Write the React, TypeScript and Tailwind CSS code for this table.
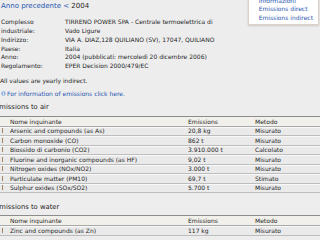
import React from 'react';

const info = [
  { label: 'Complesso', value: 'TIRRENO POWER SPA - Centrale termoelettrica di' },
  { label: 'industriale:', value: 'Vado Ligure' },
  { label: 'Indirizzo:', value: 'VIA A. DIAZ,128 QUILIANO (SV), 17047, QUILIANO' },
  { label: 'Paese:', value: 'Italia' },
  { label: 'Anno:', value: '2004 (pubblicati: mercoledì 20 dicembre 2006)' },
  { label: 'Regolamento:', value: 'EPER Decision 2000/479/EC' },
];

const air = [
  ['Arsenic and compounds (as As)', '20,8 kg', 'Misurato'],
  ['Carbon monoxide (CO)', '862 t', 'Misurato'],
  ['Biossido di carbonio (CO2)', '3.910.000 t', 'Calcolato'],
  ['Fluorine and inorganic compounds (as HF)', '9,02 t', 'Misurato'],
  ['Nitrogen oxides (NOx/NO2)', '3.000 t', 'Misurato'],
  ['Particulate matter (PM10)', '69,7 t', 'Stimato'],
  ['Sulphur oxides (SOx/SO2)', '5.700 t', 'Misurato'],
];

const water = [['Zinc and compounds (as Zn)', '117 kg', 'Misurato']];

const Table: React.FC<{ rows: string[][] }> = ({ rows }) => (
  <div className="w-full border-t border-[#8c8c8c]">
    <div className="flex items-center h-[10px] bg-[#f2f0ea] border-b border-[#a9a9a9] text-[6px]">
      <span className="w-[188px] pl-[10px]">Nome inquinante</span>
      <span className="w-[67px]">Emissions</span>
      <span>Metodo</span>
    </div>
    {rows.map((r) => (
      <div
        key={r[0]}
        className="flex items-center h-[9.5px] bg-[#eaeaea] border-b border-[#bdbdbd] shadow-[inset_0_1px_0_#f8f8f8] text-[6px]"
      >
        <span className="w-[10px] pl-[2px] flex items-center">
          <span className="block w-[1px] h-[5px] bg-[#a4835f]" />
        </span>
        <span className="w-[178px]">{r[0]}</span>
        <span className="w-[67px]">{r[1]}</span>
        <span>{r[2]}</span>
      </div>
    ))}
  </div>
);

export default function App() {
  return (
    <div className="relative w-[320px] h-[240px] overflow-hidden bg-[#ededed] text-[#1e1e1e] font-['DejaVu_Sans',sans-serif]">
      {/* side menu */}
      <div className="absolute right-[1px] top-[-5.5px] h-[30.5px] bg-white border border-[#dcd3c4] shadow-[0_1px_2px_rgba(0,0,0,0.15)] pl-[10px] pr-[5px] pt-[1px] text-[6px] leading-[8.5px] text-[#2856b0] whitespace-nowrap">
        <div>Informazioni</div>
        <div>Emissions direct</div>
        <div>Emissions indirect</div>
      </div>

      <div className="flex flex-col">
        <div className="h-[12px] leading-[12px] text-[7px] pl-[1px]">
          <span className="text-[#2856b0]">Anno precedente &lt;</span> 2004
        </div>

        <div className="mt-[5.6px] flex flex-col text-[6px]">
          {info.map((i) => (
            <div key={i.label} className="flex h-[8.7px] items-center">
              <span className="w-[65px] pl-[1px]">{i.label}</span>
              <span>{i.value}</span>
            </div>
          ))}
        </div>

        <div className="mt-[4.8px] h-[12px] flex items-center text-[6px]">All values are yearly indirect.</div>
        <div className="h-[13px] flex items-center text-[6px] text-[#2856b0]">
          <svg width="5" height="5" viewBox="0 0 10 10" className="mr-[1px] ml-[1px]">
            <circle cx="5" cy="5" r="4.5" fill="#8fb0e6" />
            <rect x="4.2" y="4" width="1.6" height="4" fill="#fff" />
            <rect x="4.2" y="2" width="1.6" height="1.4" fill="#fff" />
          </svg>
          For information of emissions click here.
        </div>
        <div className="h-[15px] flex items-center text-[6.8px] -ml-[5px]">Emissions to air</div>

        <div className="mt-[1px]">
          <Table rows={air} />
        </div>

        <div className="h-[22px] pt-[6px] flex items-center text-[6.8px] -ml-[5px]">Emissions to water</div>
        <Table rows={water} />
      </div>
    </div>
  );
}
